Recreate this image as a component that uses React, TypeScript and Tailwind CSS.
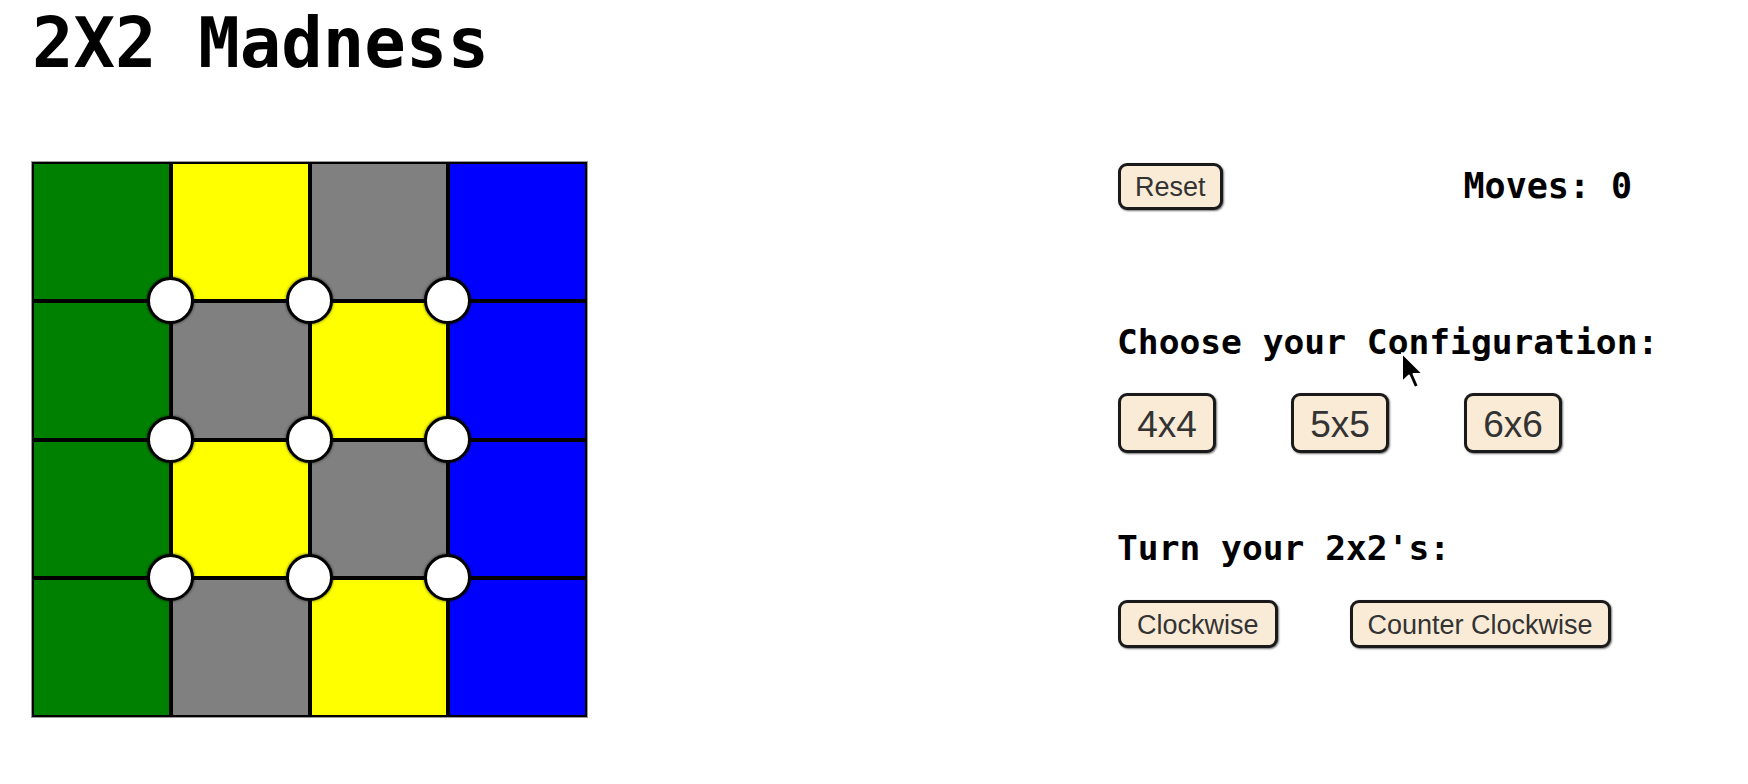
import React from "react";

const CELL = 138.5;
const mono = { fontFamily: '"DejaVu Sans Mono", Menlo, monospace' };

const board = [
  ["bg-[#008000]", "bg-[#ffff00]", "bg-[#808080]", "bg-[#0000ff]"],
  ["bg-[#008000]", "bg-[#808080]", "bg-[#ffff00]", "bg-[#0000ff]"],
  ["bg-[#008000]", "bg-[#ffff00]", "bg-[#808080]", "bg-[#0000ff]"],
  ["bg-[#008000]", "bg-[#808080]", "bg-[#ffff00]", "bg-[#0000ff]"],
];

const pivots = [1, 2, 3].flatMap((r) => [1, 2, 3].map((c) => ({ r, c })));

const Btn: React.FC<React.PropsWithChildren<{ className?: string }>> = ({
  children,
  className = "",
}) => (
  <button
    className={`bg-[#faebd7] border-[3px] border-[#1a1a1a] rounded-[9px] text-[#333] shadow-[1px_1px_2px_rgba(0,0,0,0.55)] leading-none pt-[2px] ${className}`}
    style={{ fontFamily: '"Liberation Sans", Arial, sans-serif' }}
  >
    {children}
  </button>
);

const Board = () => (
  <div className="relative w-[555px] h-[555px] shrink-0 shadow-[0_0_0_1px_#9a9a9a]">
    <div className="grid grid-cols-4 w-full h-full">
      {board.flat().map((color, i) => (
        <div key={i} className={`${color} border-2 border-black`} />
      ))}
    </div>
    {pivots.map(({ r, c }) => (
      <div
        key={`${r}-${c}`}
        className="absolute w-[47px] h-[47px] rounded-full bg-white border-[3px] border-black shadow-[0_0_3px_rgba(0,0,0,0.7)]"
        style={{ left: c * CELL - 23.5, top: r * CELL - 23.5 }}
      />
    ))}
  </div>
);

const Cursor = () => (
  <svg
    className="absolute left-[1400px] top-[351px] pointer-events-none"
    width="26"
    height="40"
    viewBox="0 0 13 20"
  >
    <path
      d="M1 1 L1 15.5 L4.5 12.3 L7.2 18.4 L9.4 17.4 L6.8 11.5 L11.5 11.5 Z"
      fill="#000"
      stroke="#fff"
      strokeWidth="1"
      strokeLinejoin="round"
    />
  </svg>
);

export default function App() {
  return (
    <div className="relative min-h-screen bg-white pl-[32px]">
      <h1
        className="text-[69px] font-bold leading-none pt-[9px] text-black"
        style={mono}
      >
        2X2 Madness
      </h1>
      <div className="flex mt-[84px]">
        <Board />
        <div className="ml-[531px] pt-[1px] flex flex-col">
          <div className="flex items-center h-[47px]">
            <Btn className="h-[47px] text-[27px] px-[14px]">Reset</Btn>
            <span
              className="ml-[241px] text-[35px] font-bold text-black"
              style={mono}
            >
              Moves: 0
            </span>
          </div>
          <h2
            className="mt-[111px] text-[34.6px] font-bold leading-[42px] -ml-[1px] text-black"
            style={mono}
          >
            Choose your Configuration:
          </h2>
          <div className="flex gap-[75px] mt-[30px]">
            <Btn className="h-[60px] w-[98px] text-[37px]">4x4</Btn>
            <Btn className="h-[60px] w-[98px] text-[37px]">5x5</Btn>
            <Btn className="h-[60px] w-[98px] text-[37px]">6x6</Btn>
          </div>
          <h2
            className="mt-[74px] text-[34.6px] font-bold leading-[42px] -ml-[1px] text-black"
            style={mono}
          >
            Turn your 2x2's:
          </h2>
          <div className="flex gap-[72px] mt-[31px]">
            <Btn className="h-[48px] text-[27px] px-[16px]">Clockwise</Btn>
            <Btn className="h-[48px] text-[27px] px-[15px]">Counter Clockwise</Btn>
          </div>
        </div>
      </div>
      <Cursor />
    </div>
  );
}
